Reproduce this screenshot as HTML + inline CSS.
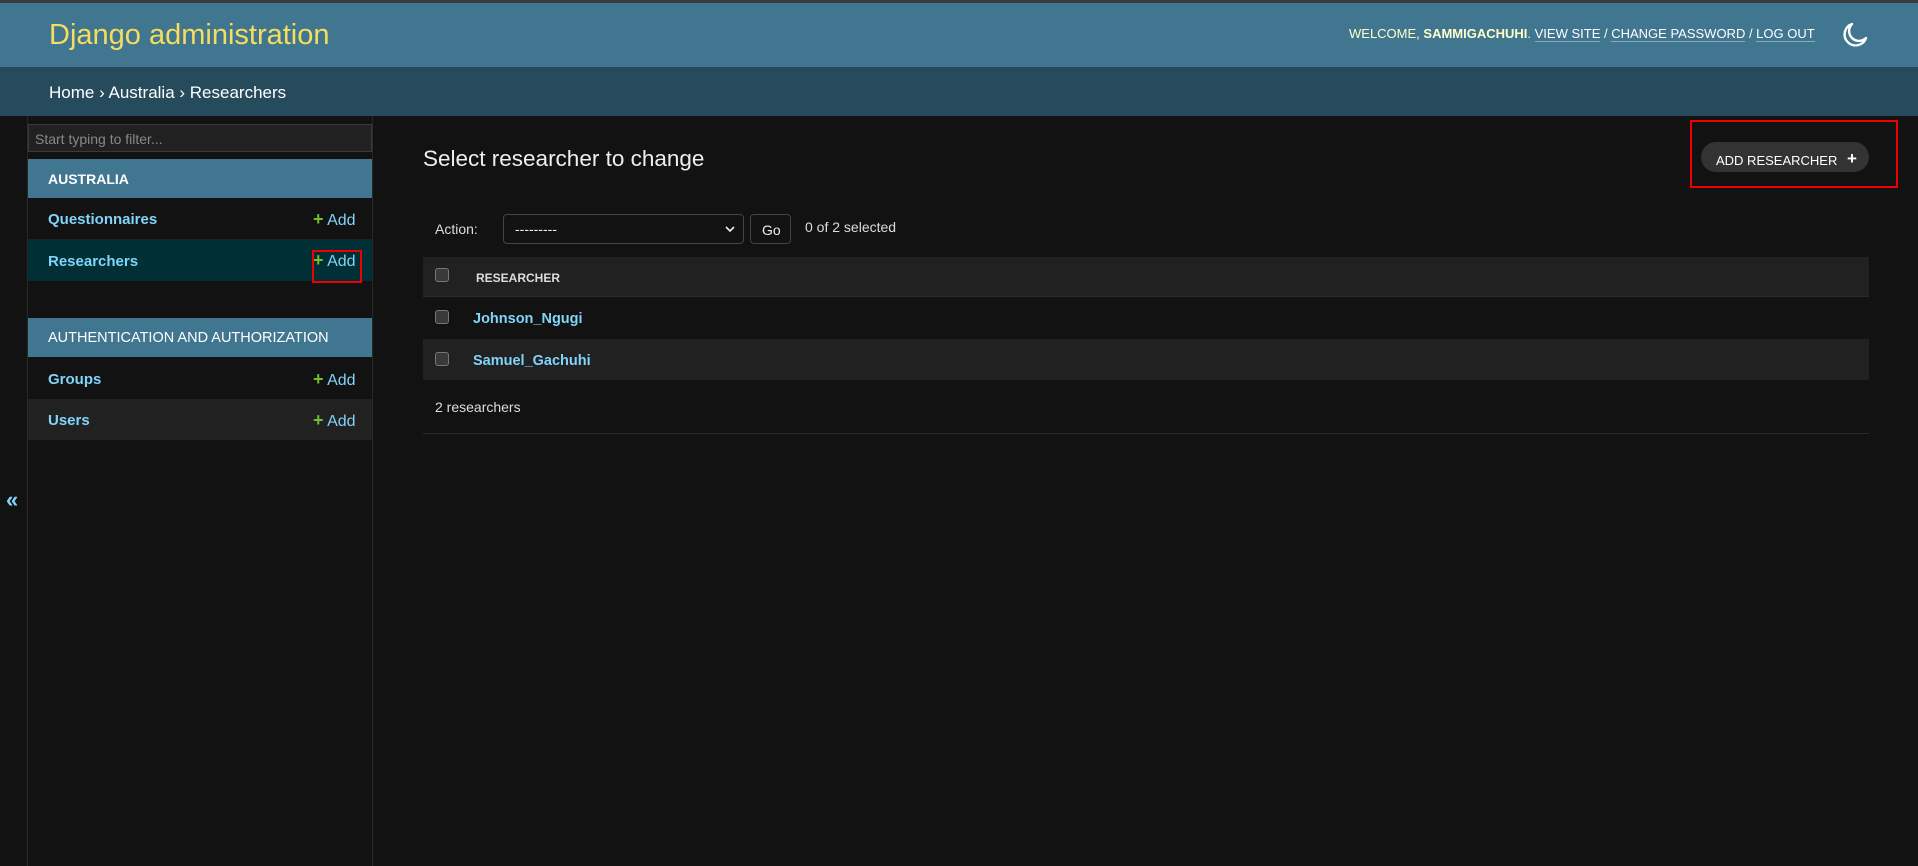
<!DOCTYPE html>
<html><head><meta charset="utf-8"><style>
*{box-sizing:border-box;margin:0;padding:0}
body{width:1918px;height:866px;background:#121212;font-family:"Liberation Sans",sans-serif;color:#eee;position:relative;overflow:hidden}
.a{position:absolute;white-space:nowrap}
.cb{width:14px;height:14px;border:1px solid #777;border-radius:3px;background:#3a3a3a}
.add{font-size:16px;color:#81d4fa}
.add b{color:#70bf2b;font-size:18px}
.lk{font-size:15px;font-weight:bold;color:#81d4fa}
</style></head><body>
<div class="a" style="left:0;top:0;width:1918px;height:3px;background:#3a3a3a"></div>
<div class="a" style="left:0;top:3px;width:1918px;height:64px;background:#417690"></div>
<div class="a" style="left:49px;top:19px;font-size:29px;color:#f5dd5d">Django administration</div>
<div class="a" style="left:1349px;top:26px;font-size:13px;color:#ffc">WELCOME, <b>SAMMIGACHUHI</b>. <span style="color:#fff;border-bottom:1px solid #8ab">VIEW SITE</span> / <span style="color:#fff;border-bottom:1px solid #8ab">CHANGE PASSWORD</span> / <span style="color:#fff;border-bottom:1px solid #8ab">LOG OUT</span></div>
<svg class="a" style="left:1841px;top:21px" width="28" height="28" viewBox="0 0 28 28"><path d="M11 3 A11 11 0 1 0 25 17 A9 9 0 0 1 11 3 Z" fill="none" stroke="#fff" stroke-width="2.4" stroke-linejoin="round"/></svg>
<div class="a" style="left:0;top:67px;width:1918px;height:49px;background:#264b5d"></div>
<div class="a" style="left:49px;top:83px;font-size:17px;color:#fff">Home › Australia › Researchers</div>

<div class="a" style="left:27px;top:116px;width:1px;height:750px;background:#2a2a2a"></div>
<div class="a" style="left:372px;top:116px;width:1px;height:750px;background:#2a2a2a"></div>
<div class="a" style="left:6px;top:487px;font-size:22px;color:#81d4fa;font-weight:bold">«</div>

<div class="a" style="left:28px;top:124px;width:344px;height:28px;background:#212121;border:1px solid #3a3a3a;font-size:14px;color:#888;padding:6px 6px">Start typing to filter...</div>
<div class="a" style="left:28px;top:159px;width:344px;height:39px;background:#417690;font-size:14px;font-weight:bold;color:#fff;padding:12px 20px">AUSTRALIA</div>
<div class="a" style="left:28px;top:198px;width:344px;height:42px;background:#121212;border-bottom:1px solid #222"></div>
<div class="a lk" style="left:48px;top:211px">Questionnaires</div>
<div class="a add" style="left:313px;top:209px"><b>+</b> Add</div>
<div class="a" style="left:28px;top:240px;width:344px;height:41px;background:#002f36"></div>
<div class="a lk" style="left:48px;top:253px">Researchers</div>
<div class="a add" style="left:313px;top:250px"><b>+</b> Add</div>
<div class="a" style="left:312px;top:250px;width:50px;height:33px;border:2px solid #e00"></div>

<div class="a" style="left:28px;top:318px;width:344px;height:39px;background:#417690;font-size:14.5px;color:#fff;padding:12px 20px">AUTHENTICATION AND AUTHORIZATION</div>
<div class="a" style="left:28px;top:357px;width:344px;height:42px;background:#121212"></div>
<div class="a lk" style="left:48px;top:371px">Groups</div>
<div class="a add" style="left:313px;top:369px"><b>+</b> Add</div>
<div class="a" style="left:28px;top:399px;width:344px;height:41px;background:#212121"></div>
<div class="a lk" style="left:48px;top:412px">Users</div>
<div class="a add" style="left:313px;top:410px"><b>+</b> Add</div>

<div class="a" style="left:423px;top:146px;font-size:22.5px;color:#eee">Select researcher to change</div>
<div class="a" style="left:1701px;top:142px;width:168px;height:30px;border-radius:15px;background:#333;font-size:13px;color:#fff;padding:8px 0 0 15px">ADD RESEARCHER <b style="font-size:17px;position:relative;top:-1px;margin-left:6px">+</b></div>
<div class="a" style="left:1690px;top:120px;width:208px;height:68px;border:2px solid #e00"></div>

<div class="a" style="left:435px;top:221px;font-size:14px;color:#ddd">Action:</div>
<div class="a" style="left:503px;top:214px;width:241px;height:30px;border:1px solid #444;border-radius:4px;background:#121212;font-size:14px;color:#eee;padding:6px 11px">---------<svg style="position:absolute;right:8px;top:10px" width="10" height="8" viewBox="0 0 10 8"><path d="M1 2 L5 6 L9 2" fill="none" stroke="#eee" stroke-width="1.6"/></svg></div>
<div class="a" style="left:750px;top:214px;width:41px;height:30px;border:1px solid #444;border-radius:4px;background:#121212;font-size:14px;color:#eee;padding:7px 0 0 11px">Go</div>
<div class="a" style="left:805px;top:219px;font-size:14px;color:#ddd">0 of 2 selected</div>

<div class="a" style="left:423px;top:257px;width:1446px;height:40px;background:#212121;border-bottom:1px solid #2a2a2a"></div>
<div class="a cb" style="left:435px;top:268px"></div>
<div class="a" style="left:476px;top:271px;font-size:12px;font-weight:bold;color:#ddd">RESEARCHER</div>
<div class="a cb" style="left:435px;top:310px"></div>
<div class="a lk" style="left:473px;top:311px;font-size:14.5px">Johnson_Ngugi</div>
<div class="a" style="left:423px;top:339px;width:1446px;height:41px;background:#212121"></div>
<div class="a cb" style="left:435px;top:352px"></div>
<div class="a lk" style="left:473px;top:353px;font-size:14.5px">Samuel_Gachuhi</div>
<div class="a" style="left:435px;top:399px;font-size:14px;color:#ddd">2 researchers</div>
<div class="a" style="left:423px;top:433px;width:1446px;height:1px;background:#2a2a2a"></div>
</body></html>
